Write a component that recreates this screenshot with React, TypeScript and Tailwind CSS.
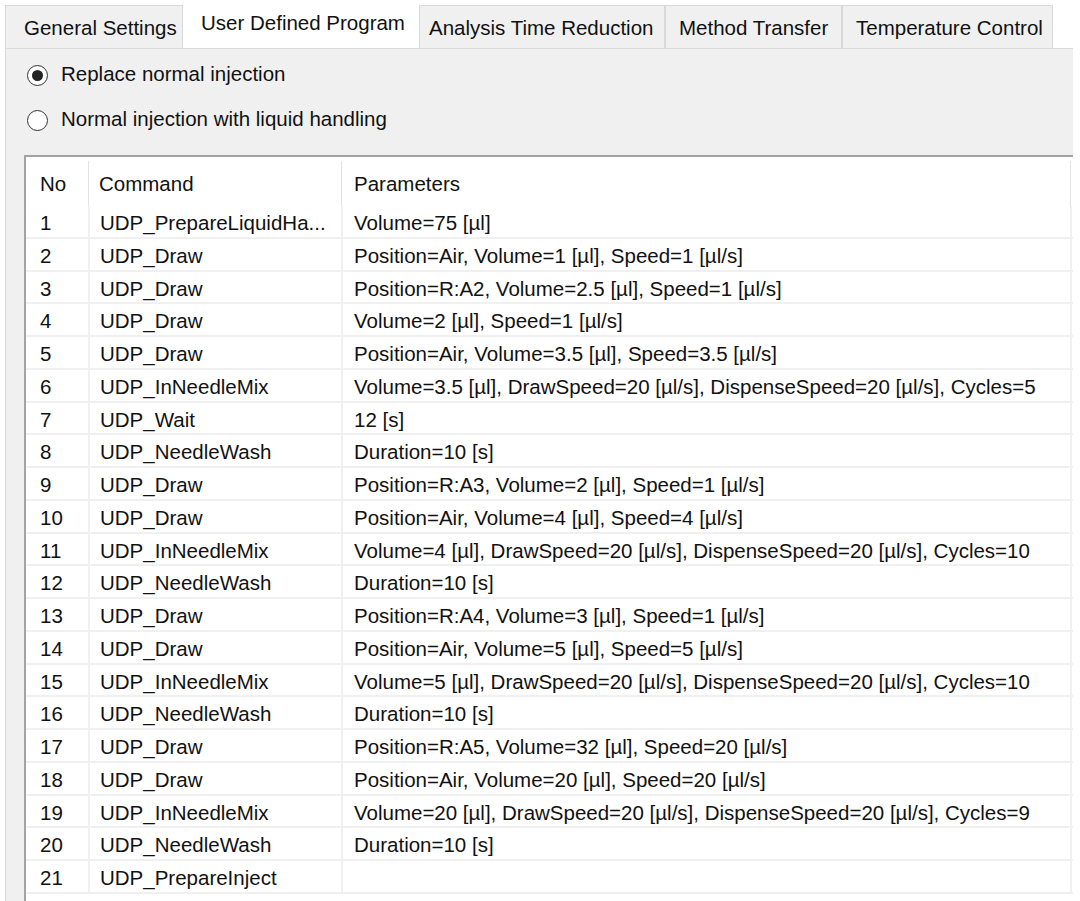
import React from 'react';

const TABS = [
  { label: 'General Settings', cls: 'w-[178px] pl-[18px]', active: false },
  { label: 'User Defined Program', cls: 'w-[236px] pl-[18px]', active: true },
  { label: 'Analysis Time Reduction', cls: 'w-[246px] pl-[9px]', active: false },
  { label: 'Method Transfer', cls: 'w-[177px] pl-[13px]', active: false },
  { label: 'Temperature Control', cls: 'w-[211px] pl-[13px]', active: false },
];

const ROWS: [string, string][] = [
  ['UDP_PrepareLiquidHa...', 'Volume=75 [µl]'],
  ['UDP_Draw', 'Position=Air, Volume=1 [µl], Speed=1 [µl/s]'],
  ['UDP_Draw', 'Position=R:A2, Volume=2.5 [µl], Speed=1 [µl/s]'],
  ['UDP_Draw', 'Volume=2 [µl], Speed=1 [µl/s]'],
  ['UDP_Draw', 'Position=Air, Volume=3.5 [µl], Speed=3.5 [µl/s]'],
  ['UDP_InNeedleMix', 'Volume=3.5 [µl], DrawSpeed=20 [µl/s], DispenseSpeed=20 [µl/s], Cycles=5'],
  ['UDP_Wait', '12 [s]'],
  ['UDP_NeedleWash', 'Duration=10 [s]'],
  ['UDP_Draw', 'Position=R:A3, Volume=2 [µl], Speed=1 [µl/s]'],
  ['UDP_Draw', 'Position=Air, Volume=4 [µl], Speed=4 [µl/s]'],
  ['UDP_InNeedleMix', 'Volume=4 [µl], DrawSpeed=20 [µl/s], DispenseSpeed=20 [µl/s], Cycles=10'],
  ['UDP_NeedleWash', 'Duration=10 [s]'],
  ['UDP_Draw', 'Position=R:A4, Volume=3 [µl], Speed=1 [µl/s]'],
  ['UDP_Draw', 'Position=Air, Volume=5 [µl], Speed=5 [µl/s]'],
  ['UDP_InNeedleMix', 'Volume=5 [µl], DrawSpeed=20 [µl/s], DispenseSpeed=20 [µl/s], Cycles=10'],
  ['UDP_NeedleWash', 'Duration=10 [s]'],
  ['UDP_Draw', 'Position=R:A5, Volume=32 [µl], Speed=20 [µl/s]'],
  ['UDP_Draw', 'Position=Air, Volume=20 [µl], Speed=20 [µl/s]'],
  ['UDP_InNeedleMix', 'Volume=20 [µl], DrawSpeed=20 [µl/s], DispenseSpeed=20 [µl/s], Cycles=9'],
  ['UDP_NeedleWash', 'Duration=10 [s]'],
  ['UDP_PrepareInject', ''],
];

function Radio({ checked, label }: { checked: boolean; label: string }) {
  return (
    <div className="flex items-center h-[24px] pl-[21px]">
      <span className="flex h-[21px] w-[21px] items-center justify-center rounded-full border-[1.5px] border-[#333] bg-white">
        {checked && <span className="h-[11px] w-[11px] rounded-full bg-[#222]" />}
      </span>
      <span className="ml-[13px] -mt-[1px]">{label}</span>
    </div>
  );
}

export default function App() {
  return (
    <div
      className="w-[1080px] h-[901px] overflow-hidden bg-white text-[20.5px] text-[#111]"
      style={{ fontFamily: '"Liberation Sans", Arial, sans-serif' }}
    >
      {/* tab strip */}
      <div className="flex items-end h-[48px] pl-[5px]">
        {TABS.map((t) =>
          t.active ? (
            <div key={t.label} className={`${t.cls} h-[48px] bg-white flex items-center pb-[1px]`}>
              {t.label}
            </div>
          ) : (
            <div
              key={t.label}
              className={`${t.cls} h-[43px] bg-[#f0f0f0] border border-b-0 border-[#d9d9d9] flex items-center pt-[3px]`}
            >
              {t.label}
            </div>
          )
        )}
      </div>

      {/* panel */}
      <div className="ml-[5px] w-[1068px] h-[853px] bg-[#f0f0f0] border-l border-t border-[#dadada] flex flex-col">
        <div className="pt-[14px] flex flex-col gap-[21px]">
          <Radio checked label="Replace normal injection" />
          <Radio checked={false} label="Normal injection with liquid handling" />
        </div>

        {/* list view */}
        <div className="mt-[23px] ml-[18px] flex-1 bg-white border-t-2 border-l-2 border-[#a3a3a3]">
          <div className="flex h-[49px]">
            <div className="w-[62px] flex items-center pl-[14px] pt-[5px]">No</div>
            <div className="w-px h-[45px] self-end bg-[#e3e3e3]" />
            <div className="w-[252px] flex items-center pl-[10px] pt-[5px]">Command</div>
            <div className="w-px h-[45px] self-end bg-[#e3e3e3]" />
            <div className="w-[728px] flex items-center pl-[12px] pt-[5px]">Parameters</div>
            <div className="w-px h-[45px] self-end bg-[#e3e3e3]" />
          </div>
          {ROWS.map(([cmd, params], i) => (
            <div key={i} className="flex h-[32.75px] border-b-2 border-[#f0f0f0]">
              <div className="w-[62px] flex items-center pl-[14px] pt-[4px]">{i + 1}</div>
              <div className="w-[2px] bg-[#f0f0f0]" />
              <div className="w-[251px] flex items-center pl-[10px] pt-[4px] whitespace-nowrap">{cmd}</div>
              <div className="w-[2px] bg-[#f0f0f0]" />
              <div className="w-[727px] flex items-center pl-[11px] pt-[4px] whitespace-nowrap">{params}</div>
              <div className="w-[2px] bg-[#f0f0f0]" />
            </div>
          ))}
        </div>
      </div>
    </div>
  );
}
